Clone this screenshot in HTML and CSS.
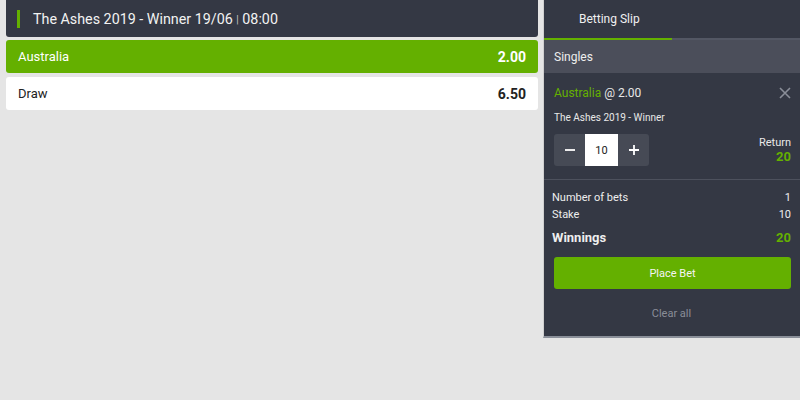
FILE: index.html
```html
<!DOCTYPE html>
<html lang="en">
<head>
    <meta charset="UTF-8">
    <title>Betting</title>
    <link rel="stylesheet" href="styles.css">
</head>
<body>
<div class="page">
    <div class="market">
        <div class="market-head">
            <span class="accent"></span>
            <span>The Ashes 2019 - Winner 19/06 <span class="sep">|</span> 08:00</span>
        </div>
        <div class="outcome selected">
            <span>Australia</span>
            <strong>2.00</strong>
        </div>
        <div class="outcome">
            <span>Draw</span>
            <strong>6.50</strong>
        </div>
    </div>

    <div class="slip">
        <div class="tabs">
            <div class="tab active">Betting Slip</div>
            <div class="tab"></div>
        </div>
        <div class="singles">Singles</div>

        <div class="bet">
            <div class="bet-top">
                <span><span class="green">Australia</span> @ 2.00</span>
                <svg class="close" width="12" height="12" viewBox="0 0 12 12">
                    <path d="M1 1 L11 11 M11 1 L1 11" stroke="#8a8e98" stroke-width="1.6" fill="none"/>
                </svg>
            </div>
            <div class="bet-name">The Ashes 2019 - Winner</div>
            <div class="bet-stake">
                <div class="stepper">
                    <button class="step">
                        <svg width="12" height="12" viewBox="0 0 12 12"><path d="M1 6 H11" stroke="#fff" stroke-width="1.8"/></svg>
                    </button>
                    <div class="amount">10</div>
                    <button class="step">
                        <svg width="12" height="12" viewBox="0 0 12 12"><path d="M1 6 H11 M6 1 V11" stroke="#fff" stroke-width="1.8"/></svg>
                    </button>
                </div>
                <div class="return">
                    <div>Return</div>
                    <div class="green bold">20</div>
                </div>
            </div>
        </div>

        <div class="summary">
            <div class="row"><span>Number of bets</span><span>1</span></div>
            <div class="row"><span>Stake</span><span>10</span></div>
            <div class="row total"><span>Winnings</span><span class="green">20</span></div>
            <button class="place">Place Bet</button>
            <div class="clear">Clear all</div>
        </div>
    </div>
</div>
</body>
</html>
```

FILE: styles.css
```css
* {
    box-sizing: border-box;
    font-family: 'Roboto', 'Liberation Sans', sans-serif;
}

html, body {
    margin: 0;
    padding: 0;
    height: 100%;
    overflow: hidden;
}

body {
    background: #e5e5e5;
}

.page {
    display: flex;
    align-items: flex-start;
    padding-left: 6px;
    gap: 5px;
}

.market {
    width: 532px;
    display: flex;
    flex-direction: column;
    gap: 3px;
}

.market-head {
    height: 37px;
    background: #343844;
    color: #f2f2f2;
    font-size: 14.3px;
    display: flex;
    align-items: center;
    gap: 13px;
    padding-left: 11px;
    border-radius: 0 0 3px 3px;
}

.market-head .accent {
    width: 3px;
    height: 18px;
    background: #64b000;
}

.market-head .sep {
    font-size: 10px;
    color: #c8c8c8;
    position: relative;
    top: -1px;
}

.outcome {
    height: 33px;
    background: #fff;
    color: #222;
    font-size: 13px;
    display: flex;
    align-items: center;
    justify-content: space-between;
    padding: 0 12px;
    border-radius: 3px;
}

.outcome + .outcome {
    margin-top: 1px;
}

.outcome strong {
    font-size: 14px;
    font-weight: 700;
}

.outcome.selected {
    background: #64b000;
    color: #fff;
}

.slip {
    width: 257px;
    background: #343844;
    color: #fff;
    border-left: 1px solid #d0d0d0;
    border-bottom: 2px solid #8a8f99;
    padding-bottom: 16px;
}

.tabs {
    display: flex;
    height: 40px;
}

.tab {
    flex: 1;
    font-size: 12px;
    padding: 12px 0 0 35px;
    color: #f0f0f0;
    border-bottom: 2px solid #535764;
}

.tab.active {
    border-bottom-color: #64b000;
}

.singles {
    height: 33px;
    background: #4b4e5a;
    font-size: 12px;
    display: flex;
    align-items: center;
    padding-left: 10px;
    color: #eee;
}

.bet {
    padding: 13px 9px 13px 10px;
    border-bottom: 1px solid #4d515d;
}

.bet-top {
    display: flex;
    justify-content: space-between;
    align-items: center;
    font-size: 12px;
    color: #e8e8e8;
}

.green {
    color: #64b000;
}

.bold {
    font-weight: 700;
}

.bet-name {
    font-size: 10px;
    color: #e8e8e8;
    margin-top: 12px;
}

.bet-stake {
    display: flex;
    justify-content: space-between;
    align-items: center;
    margin-top: 11px;
}

.stepper {
    display: flex;
    background: #464a55;
    border-radius: 3px;
    height: 32px;
}

.step {
    width: 31px;
    background: none;
    border: none;
    padding: 0;
    display: flex;
    align-items: center;
    justify-content: center;
}

.amount {
    width: 33px;
    background: #fff;
    color: #222;
    font-size: 11px;
    display: flex;
    align-items: center;
    justify-content: center;
}

.return {
    text-align: right;
    font-size: 11px;
    line-height: 14px;
    color: #e8e8e8;
}

.return .green {
    font-size: 13px;
}

.summary {
    padding: 9px 9px 0 8px;
}

.row {
    display: flex;
    justify-content: space-between;
    font-size: 11px;
    color: #eee;
    height: 17px;
    align-items: center;
}

.row.total {
    font-size: 13px;
    font-weight: 700;
    margin-top: 5px;
    height: 18px;
}

.place {
    display: block;
    height: 32px;
    margin: 11px 0 0 2px;
    background: #64b000;
    color: #f4f4f4;
    border: none;
    border-radius: 3px;
    font-size: 11px;
    width: 237px;
}

.clear {
    text-align: center;
    font-size: 11px;
    color: #8a8e98;
    margin-top: 18px;
}
```
